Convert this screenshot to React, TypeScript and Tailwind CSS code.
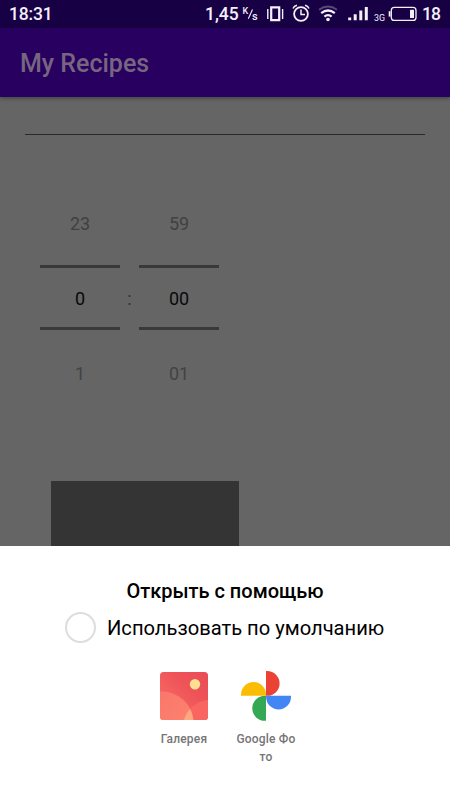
import React from "react";

function StatusBar() {
  return (
    <div className="flex h-[28px] items-center bg-[#170044] pl-[9px] pr-[9px] text-[18px] leading-[28px] text-[#f4f0fa] whitespace-nowrap">
      <span className="w-[60px] text-[17.5px] font-medium tracking-[-0.2px]">18:31</span>
      <div className="ml-auto flex items-center">
        <span className="w-[37px] text-[17.5px] font-medium">1,45</span>
        <svg className="h-[28px] w-[199px]" viewBox="242 0 199 28" fill="none" stroke="#f4f0fa">
          <g fill="#f4f0fa" stroke="none" fontFamily="Roboto, sans-serif" fontWeight="500">
            <text x="242.5" y="14" fontSize="9">K</text>
            <text x="252" y="19.5" fontSize="11">s</text>
            <text x="374" y="21" fontSize="9" fontWeight="400" textLength="11" lengthAdjust="spacingAndGlyphs">3G</text>
            <text x="422" y="20" fontSize="17.5" textLength="19">18</text>
          </g>
          <path d="M248.3 18.8L252.5 9.5" strokeWidth="1.1" />
          <path d="M271.2 7.4h8v12.7h-8z" strokeWidth="2.2" />
          <path d="M267.8 9v10M282.6 9v10" strokeWidth="1.4" />
          <circle cx="301" cy="14" r="6.9" strokeWidth="1.8" />
          <path d="M301 9.5v5h4M293 8.5q1-2.5 4-3.2M309 8.5q-1-2.5-4-3.2" strokeWidth="1.5" />
          <path d="M319 9.7q9-6.2 18 0" strokeWidth="2" opacity=".3" />
          <path d="M321.2 13.2q6.8-5.4 13.6 0M324.4 16.7q3.6-3 7.2 0" strokeWidth="2.2" />
          <circle cx="328" cy="19.5" r="1.8" fill="#f4f0fa" stroke="none" />
          <path d="M349.7 17.5v2.8M355.2 14.2v6.1M360.8 10.6v9.7M366.3 7v13.3" strokeWidth="3" />
          <rect x="391.3" y="7.4" width="24.7" height="13" rx="3" strokeWidth="1.3" />
          <path d="M389.6 11.2v5.4" strokeWidth="1.8" />
          <rect x="410" y="9.8" width="4" height="8.2" rx=".5" fill="#f4f0fa" stroke="none" />
        </svg>
      </div>
    </div>
  );
}

function Wheel({ values }: { values: [string, string, string] }) {
  return (
    <div className="flex w-[80px] flex-col text-center text-[18px] leading-[24px]">
      <div className="h-[53px] text-[#414141]">{values[0]}</div>
      <div className="h-[3px] bg-[#393939]" />
      <div className="flex h-[59px] items-center justify-center pt-[2px] text-[#090909]">{values[1]}</div>
      <div className="h-[3px] bg-[#393939]" />
      <div className="pt-[32px] text-[#434343]">{values[2]}</div>
    </div>
  );
}

function GalleryIcon() {
  return (
    <svg className="size-[50px]" viewBox="159 671 50 50">
      <defs>
        <linearGradient id="sky" x1="0" y1="1" x2="1" y2="0">
          <stop offset="0" stopColor="#fb7568" />
          <stop offset=".6" stopColor="#ef5459" />
          <stop offset="1" stopColor="#e94b55" />
        </linearGradient>
        <linearGradient id="hill" x1="0" y1="0" x2="1" y2="1">
          <stop offset="0" stopColor="#f7716a" />
          <stop offset="1" stopColor="#ff8970" />
        </linearGradient>
        <clipPath id="tile"><rect x="160" y="672" width="48" height="48" rx="3.5" /></clipPath>
        <clipPath id="leftHill"><circle cx="162" cy="723" r="31.5" /></clipPath>
      </defs>
      <g clipPath="url(#tile)">
        <rect x="160" y="672" width="48" height="48" fill="url(#sky)" />
        <circle cx="210" cy="727" r="27" fill="#f96661" />
        <circle cx="162" cy="723" r="31.5" fill="url(#hill)" />
        <circle cx="210" cy="727" r="27" fill="#ffa77f" clipPath="url(#leftHill)" />
        <circle cx="195" cy="684.3" r="5.2" fill="#ffdf91" />
      </g>
    </svg>
  );
}

function PhotosIcon() {
  return (
    <svg className="size-[50px]" viewBox="241 671 50 50">
      <path d="M266 671h1.2a12.4 12.4 0 0 1 0 24.8H266z" fill="#ea4335" />
      <path d="M291 695.8v1.2a12.4 12.4 0 0 1-24.9 0v-1.2z" fill="#4285f4" />
      <path d="M266 720.8h-1.2a12.4 12.4 0 0 1 0-25H266z" fill="#34a853" />
      <path d="M241 695.8v-1.2a12.4 12.4 0 0 1 25 0v1.2z" fill="#fbbc04" />
    </svg>
  );
}

export default function App() {
  return (
    <div className="flex h-[800px] w-[450px] flex-col overflow-hidden bg-[#656565] font-[Roboto,sans-serif]">
      <StatusBar />
      <header className="flex h-[69px] shrink-0 items-center bg-[#270060] pl-[20px] pt-[2px] text-[25px] font-medium text-[#77667f] shadow-[0_1px_4px_rgba(0,0,0,0.4)]">
        My Recipes
      </header>
      <main className="h-[449px] shrink-0 overflow-hidden">
        <div className="mx-[25px] mt-[37px] h-px bg-[#292929]" />
        <div className="ml-[40px] mt-[77px] flex h-[269px]">
          <Wheel values={["23", "0", "1"]} />
          <div className="w-[19px] pt-[75px] text-center text-[18px] leading-[24px] text-[#343434]">:</div>
          <Wheel values={["59", "00", "01"]} />
        </div>
        <div className="ml-[51px] h-[65px] w-[188px] bg-[#343434]" />
      </main>
      <section className="flex flex-1 flex-col bg-white pt-[33px] text-black">
        <h2 className="text-center text-[20px] font-medium leading-[24px]">Открыть с помощью</h2>
        <label className="ml-[65px] mt-[8px] flex h-[32px] items-center gap-[11px] whitespace-nowrap text-[20.15px]">
          <span className="size-[31px] shrink-0 rounded-full border-2 border-[#dddddd]" />
          <span className="pt-[3px]">Использовать по умолчанию</span>
        </label>
        <div className="ml-[143px] mt-[28px] flex text-center text-[12px] font-medium leading-[18px] tracking-[0.2px] text-[#757575]">
          <div className="flex w-[82px] flex-col items-center">
            <GalleryIcon />
            <span className="mt-[9px]">Галерея</span>
          </div>
          <div className="flex w-[82px] flex-col items-center">
            <PhotosIcon />
            <span className="mt-[9px]">Google Фо<br />то</span>
          </div>
        </div>
      </section>
    </div>
  );
}
